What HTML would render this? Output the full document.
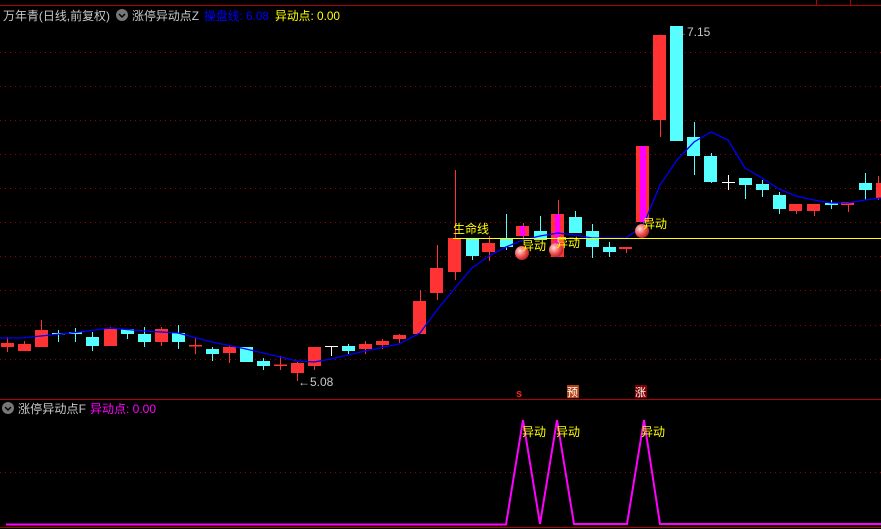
<!DOCTYPE html>
<html><head><meta charset="utf-8"><style>
html,body{margin:0;padding:0;background:#000;width:881px;height:529px;overflow:hidden}
svg{display:block}
text{font-family:"Liberation Sans","Noto Sans CJK SC",sans-serif}
</style></head><body>
<svg width="881" height="529" viewBox="0 0 881 529" xmlns="http://www.w3.org/2000/svg">
<rect width="881" height="529" fill="#000"/>
<line x1="0" y1="5.5" x2="881" y2="5.5" stroke="#b00000"/>
<line x1="816.5" y1="0" x2="816.5" y2="5" stroke="#b00000"/>
<line x1="850.5" y1="0" x2="850.5" y2="5" stroke="#b00000"/>
<line x1="0" y1="399.5" x2="881" y2="399.5" stroke="#b00000"/>
<line x1="0" y1="527.5" x2="881" y2="527.5" stroke="#b00000"/>
<g stroke="#900000" stroke-dasharray="1,4">
<line x1="0" y1="52.5" x2="881" y2="52.5"/><line x1="0" y1="86.5" x2="881" y2="86.5"/>
<line x1="0" y1="120.5" x2="881" y2="120.5"/><line x1="0" y1="154.5" x2="881" y2="154.5"/>
<line x1="0" y1="188.5" x2="881" y2="188.5"/><line x1="0" y1="222.5" x2="881" y2="222.5"/>
<line x1="0" y1="256.5" x2="881" y2="256.5"/><line x1="0" y1="290.5" x2="881" y2="290.5"/>
<line x1="0" y1="325.5" x2="881" y2="325.5"/><line x1="0" y1="359.5" x2="881" y2="359.5"/>
<line x1="0" y1="472.5" x2="881" y2="472.5"/>
</g>
<text x="3" y="20" font-size="12" fill="#c8c8c8" textLength="107" lengthAdjust="spacingAndGlyphs">万年青(日线,前复权)</text>
<circle cx="122" cy="15" r="6" fill="#777"/><path d="M119 14l3 3 3-3" stroke="#000" stroke-width="1.5" fill="none"/>
<text x="132" y="20" font-size="12" fill="#c8c8c8" textLength="67" lengthAdjust="spacingAndGlyphs">涨停异动点Z</text>
<text x="204" y="20" font-size="12" fill="#0000ff" textLength="65" lengthAdjust="spacingAndGlyphs">操盘线: 6.08</text>
<text x="275" y="20" font-size="12" fill="#ffff00" textLength="65" lengthAdjust="spacingAndGlyphs">异动点: 0.00</text>
<g stroke-width="1">
<g stroke="#ff3333">
<line x1="7.5" y1="337" x2="7.5" y2="352"/><line x1="24.5" y1="341" x2="24.5" y2="351"/><line x1="41.5" y1="320" x2="41.5" y2="347"/>
<line x1="110.5" y1="327" x2="110.5" y2="346"/><line x1="161.5" y1="327" x2="161.5" y2="346"/><line x1="195.5" y1="337" x2="195.5" y2="354"/>
<line x1="229.5" y1="345" x2="229.5" y2="363"/><line x1="280.5" y1="356" x2="280.5" y2="370"/><line x1="297.5" y1="362" x2="297.5" y2="381"/>
<line x1="314.5" y1="347" x2="314.5" y2="370"/><line x1="365.5" y1="341" x2="365.5" y2="354"/><line x1="382.5" y1="339" x2="382.5" y2="349"/>
<line x1="399.5" y1="334" x2="399.5" y2="343"/><line x1="420.5" y1="290" x2="420.5" y2="334"/><line x1="437.5" y1="245" x2="437.5" y2="300"/>
<line x1="455.5" y1="170" x2="455.5" y2="280"/><line x1="489.5" y1="236" x2="489.5" y2="261"/><line x1="523.5" y1="223" x2="523.5" y2="240"/>
<line x1="558.5" y1="200" x2="558.5" y2="257"/><line x1="626.5" y1="247" x2="626.5" y2="253"/><line x1="643.5" y1="146" x2="643.5" y2="230"/>
<line x1="660.5" y1="35" x2="660.5" y2="137"/><line x1="796.5" y1="204" x2="796.5" y2="214"/><line x1="814.5" y1="204" x2="814.5" y2="216"/>
<line x1="848.5" y1="202" x2="848.5" y2="212"/><line x1="878.5" y1="176" x2="878.5" y2="200"/>
</g>
<g stroke="#55ffff">
<line x1="58.5" y1="330" x2="58.5" y2="342"/><line x1="75.5" y1="328" x2="75.5" y2="342"/><line x1="92.5" y1="332" x2="92.5" y2="351"/>
<line x1="127.5" y1="329" x2="127.5" y2="339"/><line x1="144.5" y1="327" x2="144.5" y2="347"/><line x1="178.5" y1="325" x2="178.5" y2="349"/>
<line x1="212.5" y1="347" x2="212.5" y2="361"/><line x1="263.5" y1="358" x2="263.5" y2="370"/><line x1="348.5" y1="344" x2="348.5" y2="354"/>
<line x1="472.5" y1="239" x2="472.5" y2="260"/><line x1="506.5" y1="214" x2="506.5" y2="250"/><line x1="540.5" y1="216" x2="540.5" y2="240"/>
<line x1="575.5" y1="211" x2="575.5" y2="233"/><line x1="592.5" y1="224" x2="592.5" y2="258"/><line x1="609.5" y1="242" x2="609.5" y2="257"/>
<line x1="694.5" y1="122" x2="694.5" y2="175"/><line x1="711.5" y1="153" x2="711.5" y2="183"/><line x1="745.5" y1="178" x2="745.5" y2="199"/>
<line x1="762.5" y1="180" x2="762.5" y2="197"/><line x1="779.5" y1="192" x2="779.5" y2="214"/><line x1="831.5" y1="200" x2="831.5" y2="209"/>
<line x1="865.5" y1="173" x2="865.5" y2="200"/>
</g>
</g>
<g fill="#ff3333">
<rect x="1" y="343" width="13" height="4"/><rect x="18" y="344" width="13" height="7"/><rect x="35" y="330" width="13" height="17"/>
<rect x="104" y="329" width="13" height="17"/><rect x="155" y="329" width="13" height="13"/>
<rect x="189" y="345" width="13" height="1.5"/><rect x="223" y="347" width="13" height="6"/><rect x="274" y="364.5" width="13" height="1.5"/>
<rect x="291" y="363" width="13" height="10"/><rect x="308" y="347" width="13" height="19"/><rect x="359" y="344" width="13" height="5"/>
<rect x="376" y="341" width="13" height="4"/><rect x="393" y="335" width="13" height="4"/><rect x="413" y="301" width="13" height="33"/>
<rect x="430" y="268" width="13" height="25"/><rect x="448" y="238" width="13" height="34"/><rect x="482" y="243" width="13" height="9"/>
<rect x="516" y="226" width="13" height="10"/><rect x="551" y="214" width="13" height="43"/><rect x="619" y="247" width="13" height="2"/>
<rect x="636" y="146" width="13" height="76"/><rect x="653" y="35" width="13" height="85"/><rect x="789" y="204" width="13" height="7"/>
<rect x="807" y="204" width="13" height="7"/><rect x="841" y="202" width="13" height="3"/><rect x="876" y="183" width="5" height="15"/>
</g>
<g fill="#ff00ff">
<rect x="520" y="226" width="5" height="10"/><rect x="555" y="214" width="5" height="43"/><rect x="640" y="146" width="6" height="76"/>
</g>
<g fill="#55ffff">
<rect x="52" y="333" width="13" height="1.5"/><rect x="69" y="332" width="13" height="2"/><rect x="86" y="337" width="13" height="9"/>
<rect x="121" y="329" width="13" height="5"/><rect x="138" y="334" width="13" height="8"/><rect x="172" y="333" width="13" height="9"/>
<rect x="206" y="349" width="13" height="5"/><rect x="240" y="347" width="13" height="15"/><rect x="257" y="361" width="13" height="5"/>
<rect x="342" y="346" width="13" height="5"/><rect x="466" y="239" width="13" height="17"/><rect x="500" y="238" width="13" height="9"/>
<rect x="534" y="231" width="13" height="9"/><rect x="569" y="217" width="13" height="16"/><rect x="586" y="231" width="13" height="16"/>
<rect x="603" y="247" width="13" height="5"/><rect x="670" y="26" width="13" height="115"/><rect x="687" y="137" width="13" height="19"/>
<rect x="704" y="156" width="13" height="26"/><rect x="739" y="178" width="13" height="7"/><rect x="756" y="184" width="13" height="6"/>
<rect x="773" y="195" width="13" height="14"/><rect x="825" y="203" width="13" height="2"/><rect x="859" y="183" width="13" height="7"/>
</g>
<g stroke="#fff">
<line x1="325" y1="346.5" x2="338" y2="346.5"/><line x1="331.5" y1="346" x2="331.5" y2="356"/>
<line x1="722" y1="182.5" x2="735" y2="182.5"/><line x1="728.5" y1="175" x2="728.5" y2="190"/>
</g>
<polyline fill="none" stroke="#0000ff" stroke-width="1.3" points="0,338 20,338 41,336 60,334 80,332 110,328 144,331 178,333 212,342 246,349 280,357 297,361 314,362 331,359 365,351 399,344 420,333 437,310 455,288 472,268 489,256 506,247 523,240 540,236 558,233 575,235 592,238 609,238 626,238 643,226 660,185 677,160 694,142 711,132 728,140 745,168 762,178 779,189 796,196 814,200 831,203 848,203 865,200 881,198"/>
<line x1="453" y1="238.5" x2="881" y2="238.5" stroke="#ffff00"/>
<text x="453" y="233" font-size="12" fill="#ffff00">生命线</text>
<defs><radialGradient id="b" cx="0.35" cy="0.35" r="0.7"><stop offset="0" stop-color="#ffdede"/><stop offset="0.6" stop-color="#f05050"/><stop offset="1" stop-color="#b02020"/></radialGradient></defs>
<circle cx="522" cy="253" r="7" fill="url(#b)"/><circle cx="556" cy="250" r="7" fill="url(#b)"/><circle cx="642" cy="231" r="7" fill="url(#b)"/>
<text x="522" y="250" font-size="12" fill="#ffff00">异动</text>
<text x="556" y="247" font-size="12" fill="#ffff00">异动</text>
<text x="643" y="228" font-size="12" fill="#ffff00">异动</text>
<text x="675" y="36" font-size="12" fill="#c8c8c8">←7.15</text>
<text x="298" y="386" font-size="12" fill="#c8c8c8">←5.08</text>
<text x="516" y="397" font-size="11" fill="#ff2020" font-weight="bold">s</text>
<rect x="567" y="385" width="12" height="13" fill="#b04010"/><text x="567" y="396" font-size="11" fill="#fff">预</text>
<rect x="635" y="385" width="12" height="13" fill="#800000"/><text x="635" y="396" font-size="11" fill="#fff">涨</text>
<circle cx="8" cy="408" r="6" fill="#777"/><path d="M5 407l3 3 3-3" stroke="#000" stroke-width="1.5" fill="none"/>
<text x="18" y="413" font-size="12" fill="#c8c8c8" textLength="68" lengthAdjust="spacingAndGlyphs">涨停异动点F</text>
<text x="90" y="413" font-size="12" fill="#ff00ff" textLength="66" lengthAdjust="spacingAndGlyphs">异动点: 0.00</text>
<polyline fill="none" stroke="#ff00ff" stroke-width="2" points="6,524.5 506,524.5 523,420 540,524 557,420 574,524 627,524 644,420 660,524 881,524"/>
<text x="522" y="436" font-size="12" fill="#ffff00">异动</text>
<text x="556" y="436" font-size="12" fill="#ffff00">异动</text>
<text x="641" y="436" font-size="12" fill="#ffff00">异动</text>
</svg>
</body></html>
